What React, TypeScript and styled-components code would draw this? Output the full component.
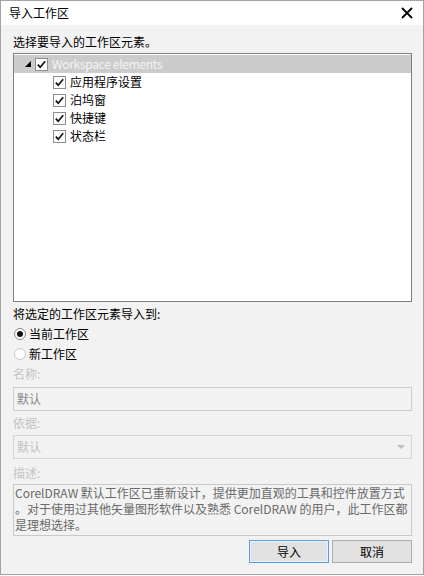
import React from "react";
import styled, { createGlobalStyle } from "styled-components";

const Global = createGlobalStyle`
  html, body { margin: 0; padding: 0; background: #ffffff; }
  * { box-sizing: border-box; }
`;

const Window = styled.div`
  width: 424px;
  height: 575px;
  border: 1px solid #a3a3a3;
  display: flex;
  flex-direction: column;
  background: #f2f2f2;
  font-family: "Noto Sans CJK SC", "Noto Sans", sans-serif;
  font-size: 12px;
  color: #000;
`;

const TitleBar = styled.div`
  height: 24px;
  flex: none;
  background: #ffffff;
  display: flex;
  align-items: center;
  justify-content: space-between;
  padding: 0 9px 0 8px;
`;

const Title = styled.span`
  line-height: 16px;
`;

const CloseButton = styled.button`
  width: 14px;
  height: 14px;
  padding: 0;
  border: 0;
  background: transparent;
  display: flex;
  align-items: center;
  justify-content: center;
`;

const Body = styled.div`
  flex: 1;
  display: flex;
  flex-direction: column;
  padding: 0 11px 0 12px;
`;

const Label = styled.div<{ $top: number; $faded?: boolean }>`
  margin-top: ${(p) => p.$top}px;
  line-height: 16px;
  height: 16px;
  color: ${(p) => (p.$faded ? "#c4c4c4" : "#000")};
`;

const Tree = styled.div`
  margin-top: 3px;
  height: 249px;
  border: 1px solid #7f7f7f;
  background: #ffffff;
  display: flex;
  flex-direction: column;
  padding-top: 1px;
`;

const TreeRow = styled.div<{ $level: number; $selected?: boolean }>`
  height: 18px;
  display: flex;
  align-items: center;
  padding-left: ${(p) => 11 + p.$level * 18}px;
  background: ${(p) => (p.$selected ? "#cccccc" : "transparent")};
  color: ${(p) => (p.$selected ? "#f4f4f4" : "#000")};
`;

const Expander = styled.span`
  width: 10px;
  height: 18px;
  display: flex;
  align-items: center;
  flex: none;
`;

const CheckBox = styled.span`
  width: 13px;
  height: 13px;
  flex: none;
  display: flex;
`;

const RowText = styled.span<{ $latin?: boolean }>`
  margin-left: 4px;
  line-height: 16px;
  white-space: nowrap;
  letter-spacing: ${(p) => (p.$latin ? "-0.3px" : "0")};
`;

const RadioRow = styled.label<{ $top: number }>`
  margin-top: ${(p) => p.$top}px;
  height: 20px;
  display: flex;
  align-items: center;
  padding-left: 1px;
`;

const RadioCircle = styled.span<{ $checked?: boolean }>`
  width: 12px;
  height: 12px;
  border-radius: 50%;
  border: 1px solid ${(p) => (p.$checked ? "#8a8a8a" : "#c7c7c7")};
  background: #ffffff;
  display: flex;
  align-items: center;
  justify-content: center;
  flex: none;
  &::after {
    content: "";
    width: 6px;
    height: 6px;
    border-radius: 50%;
    background: ${(p) => (p.$checked ? "#111" : "transparent")};
  }
`;

const RadioText = styled.span`
  margin-left: 3px;
  line-height: 16px;
`;

const Field = styled.div<{ $top: number; $height: number; $border: string; $color: string }>`
  margin-top: ${(p) => p.$top}px;
  height: ${(p) => p.$height}px;
  border: 1px solid ${(p) => p.$border};
  color: ${(p) => p.$color};
  background: #f2f2f2;
  display: flex;
  align-items: center;
  justify-content: space-between;
  padding: 0 6px 0 3px;
  line-height: 16px;
`;

const Arrow = styled.span`
  width: 0;
  height: 0;
  border-left: 4px solid transparent;
  border-right: 4px solid transparent;
  border-top: 4px solid #bdbdbd;
`;

const TextArea = styled.div`
  margin-top: 3px;
  height: 52px;
  border: 1px solid #c9c9c9;
  background: #f2f2f2;
  color: #6a6a6a;
  padding: 0 0 0 1px;
  line-height: 16px;
  white-space: nowrap;
  overflow: hidden;
`;

const Line = styled.div`
  height: 16px;
`;

const ButtonRow = styled.div`
  margin-top: 4px;
  display: flex;
  justify-content: flex-end;
  gap: 3px;
`;

const Button = styled.button<{ $default?: boolean }>`
  width: 80px;
  height: 23px;
  padding: 0;
  font-family: inherit;
  font-size: 12px;
  color: #000;
  background: #e1e1e1;
  border: 1px solid ${(p) => (p.$default ? "#56a0e0" : "#adadad")};
  box-shadow: ${(p) => (p.$default ? "inset 0 0 0 1px #e8f1f9" : "none")};
  line-height: 16px;
`;

const Check = () => (
  <CheckBox>
    <svg width="13" height="13" viewBox="0 0 13 13">
      <rect x="0.5" y="0.5" width="12" height="12" fill="#fff" stroke="#8e8e8e" />
      <path d="M2.8 6.6 L5.2 9.2 L10.2 3.2" fill="none" stroke="#111" strokeWidth="1.7" />
    </svg>
  </CheckBox>
);

const children = ["应用程序设置", "泊坞窗", "快捷键", "状态栏"];

export default function App() {
  return (
    <>
      <Global />
      <Window>
        <TitleBar>
          <Title>导入工作区</Title>
          <CloseButton aria-label="关闭">
            <svg width="12" height="12" viewBox="0 0 12 12">
              <path d="M1 1 L11 11 M11 1 L1 11" stroke="#000" strokeWidth="1.8" />
            </svg>
          </CloseButton>
        </TitleBar>
        <Body>
          <Label $top={9}>选择要导入的工作区元素。</Label>
          <Tree>
            <TreeRow $level={0} $selected>
              <Expander>
                <svg width="6" height="6" viewBox="0 0 6 6">
                  <path d="M6 0 L6 6 L0 6 Z" fill="#000" />
                </svg>
              </Expander>
              <Check />
              <RowText $latin>Workspace elements</RowText>
            </TreeRow>
            {children.map((c) => (
              <TreeRow key={c} $level={1}>
                <Expander />
                <Check />
                <RowText>{c}</RowText>
              </TreeRow>
            ))}
          </Tree>
          <Label $top={4}>将选定的工作区元素导入到:</Label>
          <RadioRow $top={2}>
            <RadioCircle $checked />
            <RadioText>当前工作区</RadioText>
          </RadioRow>
          <RadioRow $top={0}>
            <RadioCircle />
            <RadioText>新工作区</RadioText>
          </RadioRow>
          <Label $top={2} $faded>名称:</Label>
          <Field $top={5} $height={24} $border="#cccccc" $color="#8a8a8a">默认</Field>
          <Label $top={4} $faded>依据:</Label>
          <Field $top={4} $height={24} $border="#d6d6d6" $color="#c2c2c2">
            <span>默认</span>
            <Arrow />
          </Field>
          <Label $top={6} $faded>描述:</Label>
          <TextArea>
            <Line>CorelDRAW 默认工作区已重新设计，提供更加直观的工具和控件放置方式</Line>
            <Line>。对于使用过其他矢量图形软件以及熟悉 CorelDRAW 的用户，此工作区都</Line>
            <Line>是理想选择。</Line>
          </TextArea>
          <ButtonRow>
            <Button $default>导入</Button>
            <Button>取消</Button>
          </ButtonRow>
        </Body>
      </Window>
    </>
  );
}
